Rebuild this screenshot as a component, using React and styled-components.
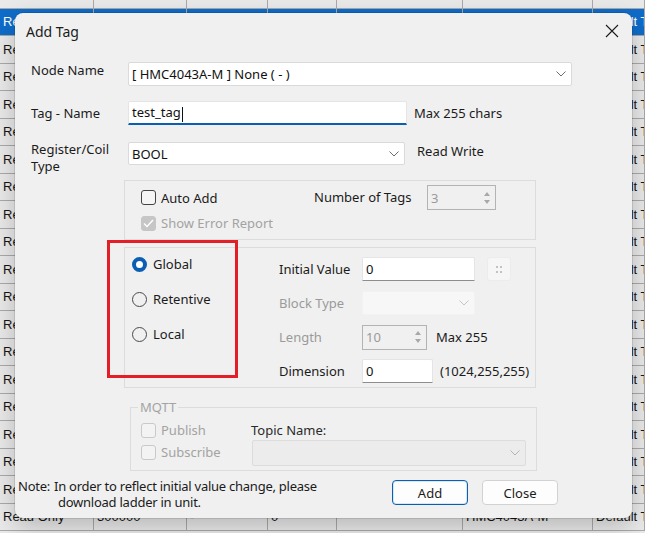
import React from "react"
import styled, { createGlobalStyle } from "styled-components"

const GlobalStyle = createGlobalStyle`
  html, body {
    margin: 0;
    padding: 0;
  }
  body {
    width: 645px;
    height: 533px;
    overflow: hidden;
    background: #eaeaea;
    font-family: "Noto Sans", "Segoe UI", sans-serif;
  }
`

// background grid behind the dialog
const COLS = [94, 93, 81, 69, 126, 130, 52]
const TOP_ROW = ["Read Write", "", "", "0", "", "HMC4043A-M", "Default Tag"]
const ROW = ["Read Only", "300000", "-", "0", "", "HMC4043A-M", "Default Tag"]

const Screen = styled.div`
  position: relative;
  width: 645px;
  height: 533px;
  overflow: hidden;
`

const Grid = styled.div`
  margin-top: -19px;
`

const GridRow = styled.div`
  display: flex;
  height: 27.5px;
  box-sizing: border-box;
  border-bottom: 1px solid #a9a9a9;
  background: ${p => (p.$selected ? "#0f6cc9" : "#e9e9e9")};
  color: ${p => (p.$selected ? "#fff" : "#151515")};
`

const GridCell = styled.div`
  flex: 0 0 ${p => p.$w}px;
  box-sizing: border-box;
  border-right: 1px solid #a9a9a9;
  padding: 0 3px;
  display: flex;
  align-items: center;
  font-family: "Liberation Sans", Arial, sans-serif;
  font-size: 13px;
  white-space: nowrap;
  overflow: hidden;
`

const Dialog = styled.div`
  position: absolute;
  left: 15px;
  top: 13px;
  width: 617px;
  height: 505px;
  box-sizing: border-box;
  background: #f0f0f0;
  border-radius: 8px;
  box-shadow: 0 0 0 1px rgba(0, 0, 0, 0.1), 0 8px 24px rgba(0, 0, 0, 0.22);
  display: flex;
  flex-direction: column;
  font-size: 13px;
  color: #1b1b1b;
`

const TitleBar = styled.div`
  height: 36px;
  flex: 0 0 36px;
  display: flex;
  align-items: center;
  justify-content: space-between;
  padding: 0 13px 0 11px;
`

const Title = styled.span`
  font-size: 14px;
`

const Form = styled.div`
  padding-left: 16px;
  display: flex;
  flex-direction: column;
`

const FieldRow = styled.div`
  display: flex;
  align-items: ${p => (p.$top ? "flex-start" : "center")};
  height: ${p => p.$h}px;
  margin-top: ${p => p.$mt}px;
`

const Label = styled.div`
  width: ${p => p.$w || 97}px;
  flex-shrink: 0;
  line-height: 17px;
  margin-top: ${p => p.$mt || 0}px;
  color: ${p => (p.$disabled ? "#9a9a9a" : "inherit")};
`

const Box = styled.div`
  width: ${p => p.$w}px;
  height: ${p => p.$h || 24}px;
  box-sizing: border-box;
  flex-shrink: 0;
  display: flex;
  align-items: center;
  justify-content: space-between;
  padding: 0 5px 0 3px;
  background: ${p => (p.$disabled ? "#f7f7f7" : "#fff")};
  border: 1px solid ${p => (p.$disabled ? "#f2f2f2" : "#dadada")};
  border-radius: 2px;
  color: ${p => (p.$disabled ? "#9a9a9a" : "#111")};
`

const TextBox = styled(Box)`
  border-color: #e4e4e4;
  border-bottom: ${p => (p.$focused ? "2px solid #0a5fb4" : "1px solid #8d8d8d")};
  border-radius: 2px 2px 0 0;
`

const Caret = styled.span`
  display: inline-block;
  width: 1px;
  height: 15px;
  background: #111;
  margin-left: 1px;
  vertical-align: middle;
`

const Hint = styled.span`
  margin-left: ${p => p.$ml}px;
  white-space: nowrap;
`

const Group = styled.div`
  margin: ${p => p.$mt}px 0 0 93px;
  width: 412px;
  height: ${p => p.$h}px;
  box-sizing: border-box;
  border: 1px solid #dcdcdc;
`

const AutoRow = styled.div`
  display: flex;
  align-items: center;
  height: ${p => p.$h || 25}px;
  margin-top: ${p => p.$mt || 0}px;
  padding-left: 16px;
`

const CheckRow = styled.label`
  display: flex;
  align-items: center;
  gap: 5px;
  height: ${p => p.$h || 16}px;
  width: ${p => (p.$w ? `${p.$w}px` : "auto")};
  flex-shrink: 0;
  margin-top: ${p => p.$mt || 0}px;
  color: ${p => (p.$disabled ? "#a3a3a3" : "inherit")};
`

const CheckBox = styled.span`
  width: 15px;
  height: 15px;
  box-sizing: border-box;
  border-radius: 3px;
  flex-shrink: 0;
  display: flex;
  align-items: center;
  justify-content: center;
  border: 1px solid ${p => (p.$disabled ? "#c9c9c9" : "#444")};
  background: ${p => (p.$checked ? "#c6c6c6" : p.$disabled ? "#f3f3f3" : "#f5f5f5")};
  ${p => p.$checked && "border-color: #c6c6c6;"}
`

const Spin = styled.div`
  width: ${p => p.$w}px;
  height: 25px;
  box-sizing: border-box;
  flex-shrink: 0;
  border: 1px solid #b3b3b3;
  background: #f0f0f0;
  display: flex;
  align-items: center;
  justify-content: space-between;
  padding-left: 3px;
  color: #9a9a9a;
`

const SpinArrows = styled.div`
  width: 14px;
  height: 100%;
  display: flex;
  flex-direction: column;
  align-items: center;
  justify-content: center;
  gap: 4px;
  margin-right: 1px;
`

const Tri = styled.span`
  width: 0;
  height: 0;
  border-left: 3.5px solid transparent;
  border-right: 3.5px solid transparent;
  ${p =>
    p.$down ? "border-top: 4px solid #a8a8a8;" : "border-bottom: 4px solid #a8a8a8;"}
`

const ScopeGroup = styled(Group)`
  display: flex;
`

const RadioCol = styled.div`
  width: 147px;
  flex-shrink: 0;
  padding: 6px 0 0 7px;
  display: flex;
  flex-direction: column;
  gap: 15px;
`

const RadioRow = styled.label`
  display: flex;
  align-items: center;
  gap: 6px;
  height: 20px;
`

const Radio = styled.span`
  width: 15px;
  height: 15px;
  box-sizing: border-box;
  border-radius: 50%;
  flex-shrink: 0;
  border: ${p => (p.$checked ? "4.5px solid #0a5fb4" : "1px solid #4a4a4a")};
  background: ${p => (p.$checked ? "#fff" : "transparent")};
`

const ValueCol = styled.div`
  padding-top: 9px;
  display: flex;
  flex-direction: column;
  gap: 10px;
`

const ValueRow = styled.div`
  display: flex;
  align-items: center;
  height: 24px;
`

const DotsButton = styled.div`
  width: 24px;
  height: 24px;
  margin-left: 12px;
  box-sizing: border-box;
  border: 1px solid #ececec;
  background: #f6f6f6;
  border-radius: 3px;
  display: grid;
  grid-template-columns: 2px 2px;
  gap: 3px 2px;
  align-content: center;
  justify-content: center;
`

const Dot = styled.span`
  width: 2px;
  height: 2px;
  background: #c2c2c2;
`

const Fieldset = styled.fieldset`
  margin: 11px 0 0 99px;
  width: 407px;
  box-sizing: border-box;
  border: 1px solid #dcdcdc;
  padding: 4px 0 4px 10px;
  display: flex;
  color: #a3a3a3;
`

const Legend = styled.legend`
  padding: 0 2px;
  margin-left: -3px;
  line-height: 16px;
  color: #a3a3a3;
`

const PubCol = styled.div`
  width: 110px;
  flex-shrink: 0;
  display: flex;
  flex-direction: column;
`

const TopicCol = styled.div`
  display: flex;
  flex-direction: column;
  color: #2a2a2a;
`

const TopicLabel = styled.div`
  margin-top: 3px;
  line-height: 16px;
`

const TopicSelect = styled(Box)`
  margin: 2px 0 0 1px;
  background: #ececec;
  border-color: #dcdcdc;
`

const Footer = styled.div`
  margin-top: 7px;
  padding-left: 3px;
  display: flex;
`

const Note = styled.div`
  width: 374px;
  display: flex;
  line-height: 16px;
  letter-spacing: -0.25px;
`

const NoteLabel = styled.span`
  width: 36px;
  flex-shrink: 0;
`

const NoteSecond = styled.span`
  display: block;
  margin-left: 4px;
`

const Button = styled.button`
  width: 76px;
  height: 25px;
  margin: 2px 0 0 ${p => p.$ml || 0}px;
  box-sizing: border-box;
  background: #fdfdfd;
  border: 1px solid ${p => (p.$primary ? "#0a5fb4" : "#d2d2d2")};
  box-shadow: ${p => (p.$primary ? "inset 0 0 0 1px #d9e6f3" : "none")};
  border-radius: 4px;
  font: inherit;
  font-size: 13px;
  color: #1b1b1b;
  padding: 0;
`

const Annotation = styled.div`
  position: absolute;
  left: 92px;
  top: 227px;
  width: 131px;
  height: 138px;
  box-sizing: border-box;
  border: 3px solid #e21f26;
`

const Chevron = ({ color = "#6a6a6a" }) => (
  <svg width="10" height="6" viewBox="0 0 10 6">
    <path d="M0.5 0.5 L5 5 L9.5 0.5" fill="none" stroke={color} strokeWidth="1" />
  </svg>
)

const CloseIcon = () => (
  <svg width="14" height="14" viewBox="0 0 14 14">
    <path d="M1 1 L13 13 M13 1 L1 13" stroke="#1b1b1b" strokeWidth="1.1" />
  </svg>
)

const Tick = () => (
  <svg width="11" height="9" viewBox="0 0 11 9">
    <path d="M1 4.5 L4 7.5 L10 1" fill="none" stroke="#fff" strokeWidth="1.4" />
  </svg>
)

const App = () => {
  const rows = Array.from({ length: 20 }, (_, i) => i)

  return (
    <Screen>
      <GlobalStyle />
      <Grid>
        {rows.map(i => (
          <GridRow key={i} $selected={i === 1}>
            {(i === 0 ? TOP_ROW : ROW).map((text, c) => (
              <GridCell key={c} $w={COLS[c]}>
                {text}
              </GridCell>
            ))}
          </GridRow>
        ))}
      </Grid>

      <Dialog>
        <TitleBar>
          <Title>Add Tag</Title>
          <CloseIcon />
        </TitleBar>

        <Form>
          <FieldRow $h={24} $mt={13} $top>
            <Label>Node Name</Label>
            <Box $w={444}>
              <span>[ HMC4043A-M ] None ( - )</span>
              <Chevron />
            </Box>
          </FieldRow>

          <FieldRow $h={24} $mt={15}>
            <Label>Tag - Name</Label>
            <TextBox $w={279} $focused>
              <span>
                test_tag
                <Caret />
              </span>
            </TextBox>
            <Hint $ml={7}>Max 255 chars</Hint>
          </FieldRow>

          <FieldRow $h={23} $mt={17} $top>
            <Label $mt={-1.5}>
              Register/Coil
              <br />
              Type
            </Label>
            <Box $w={277} $h={23}>
              <span>BOOL</span>
              <Chevron />
            </Box>
            <Hint $ml={12}>Read Write</Hint>
          </FieldRow>

          <Group $mt={15} $h={60}>
            <AutoRow $mt={4}>
              <CheckRow $w={173}>
                <CheckBox />
                Auto Add
              </CheckRow>
              <Label $w={113}>Number of Tags</Label>
              <Spin $w={69}>
                <span>3</span>
                <SpinArrows>
                  <Tri />
                  <Tri $down />
                </SpinArrows>
              </Spin>
            </AutoRow>
            <AutoRow $h={16} $mt={5}>
              <CheckRow $disabled>
                <CheckBox $checked $disabled>
                  <Tick />
                </CheckBox>
                Show Error Report
              </CheckRow>
            </AutoRow>
          </Group>

          <ScopeGroup $mt={7} $h={141}>
            <RadioCol>
              <RadioRow>
                <Radio $checked />
                Global
              </RadioRow>
              <RadioRow>
                <Radio />
                Retentive
              </RadioRow>
              <RadioRow>
                <Radio />
                Local
              </RadioRow>
            </RadioCol>

            <ValueCol>
              <ValueRow>
                <Label $w={83}>Initial Value</Label>
                <TextBox $w={113}>
                  <span>0</span>
                </TextBox>
                <DotsButton>
                  <Dot />
                  <Dot />
                  <Dot />
                  <Dot />
                </DotsButton>
              </ValueRow>
              <ValueRow>
                <Label $w={83} $disabled>
                  Block Type
                </Label>
                <Box $w={113} $disabled>
                  <span />
                  <Chevron color="#c4c4c4" />
                </Box>
              </ValueRow>
              <ValueRow>
                <Label $w={83} $disabled>
                  Length
                </Label>
                <Spin $w={65}>
                  <span>10</span>
                  <SpinArrows>
                    <Tri />
                    <Tri $down />
                  </SpinArrows>
                </Spin>
                <Hint $ml={9}>Max 255</Hint>
              </ValueRow>
              <ValueRow>
                <Label $w={83}>Dimension</Label>
                <TextBox $w={71}>
                  <span>0</span>
                </TextBox>
                <Hint $ml={7}>(1024,255,255)</Hint>
              </ValueRow>
            </ValueCol>
          </ScopeGroup>

          <Fieldset disabled>
            <Legend>MQTT</Legend>
            <PubCol>
              <CheckRow $h={22} $disabled>
                <CheckBox $disabled />
                Publish
              </CheckRow>
              <CheckRow $h={22} $disabled>
                <CheckBox $disabled />
                Subscribe
              </CheckRow>
            </PubCol>
            <TopicCol>
              <TopicLabel>Topic Name:</TopicLabel>
              <TopicSelect $w={274} $h={26}>
                <span />
                <Chevron color="#b4b4b4" />
              </TopicSelect>
            </TopicCol>
          </Fieldset>
        </Form>

        <Footer>
          <Note>
            <NoteLabel>Note:</NoteLabel>
            <span>
              In order to reflect initial value change, please
              <NoteSecond>download ladder in unit.</NoteSecond>
            </span>
          </Note>
          <Button $primary>Add</Button>
          <Button $ml={14}>Close</Button>
        </Footer>

        <Annotation />
      </Dialog>
    </Screen>
  )
}

export default App
